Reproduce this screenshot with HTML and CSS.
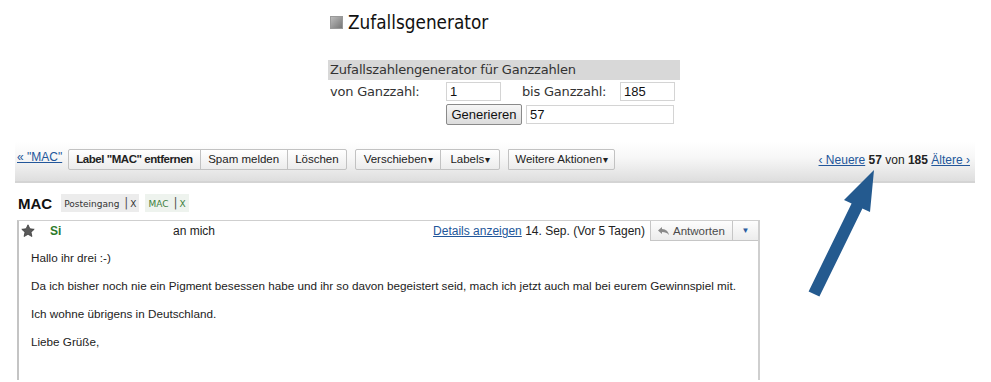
FILE: index.html
```html
<!DOCTYPE html>
<html lang="de">
<head>
<meta charset="utf-8">
<title>Zufallsgenerator</title>
<link rel="stylesheet" href="styles.css">
</head>
<body>
<div class="page">
  <section class="gen">
    <h1 class="gen-title"><span class="gen-box"></span>Zufallsgenerator</h1>
    <div class="gen-form">
      <div class="gen-head">Zufallszahlengenerator für Ganzzahlen</div>
      <div class="gen-row">
        <span class="gen-label">von Ganzzahl:</span>
        <span class="gen-input small">1</span>
        <span class="gen-label second">bis Ganzzahl:</span>
        <span class="gen-input small">185</span>
      </div>
      <div class="gen-row gen-row-btn">
        <span class="gen-btn">Generieren</span>
        <span class="gen-input wide">57</span>
      </div>
    </div>
  </section>

  <section class="mail">
    <div class="toolbar">
      <a class="back">« "MAC"</a>
      <div class="group">
        <span class="tb bold">Label "MAC" entfernen</span><span class="tb">Spam melden</span><span class="tb">Löschen</span>
      </div>
      <div class="group">
        <span class="tb">Verschieben<span class="caret">▾</span></span><span class="tb labels">Labels<span class="caret">▾</span></span>
      </div>
      <div class="group">
        <span class="tb weitere">Weitere Aktionen<span class="caret">▾</span></span>
      </div>
      <div class="nav"><a class="lnk">‹ Neuere</a> <b>57</b> von <b>185</b> <a class="lnk">Ältere ›</a></div>
    </div>

    <div class="subject">
      <span class="subj">MAC</span>
      <span class="tag">Posteingang <span class="bar">|</span>X</span>
      <span class="tag green">MAC <span class="bar">|</span>X</span>
    </div>

    <div class="msg">
      <div class="msg-head">
        <svg class="star" width="14" height="14" viewBox="0 0 14 14"><path d="M7 0.8l1.9 4 4.3.5-3.2 2.9.9 4.3L7 10.3 3.1 12.5l.9-4.3L.8 5.3l4.3-.5z" fill="#5a5a5a" stroke="#3c3c3c" stroke-width="0.8"/></svg>
        <span class="from">Si</span>
        <span class="to">an mich</span>
        <span class="meta"><a class="lnk">Details anzeigen</a> 14. Sep. (Vor 5 Tagen)</span>
        <span class="reply"><svg width="13" height="10" viewBox="0 0 13 10"><path d="M5 1L1 4.5 5 8V6c3 0 5 .7 7 3-.6-3.4-2.8-5.7-7-6z" fill="#8a8a8a"/></svg>Antworten</span><span class="drop">▼</span>
      </div>
      <div class="msg-body">
        <p>Hallo ihr drei :-)</p>
        <p>Da ich bisher noch nie ein Pigment besessen habe und ihr so davon begeistert seid, mach ich jetzt auch mal bei eurem Gewinnspiel mit.</p>
        <p>Ich wohne übrigens in Deutschland.</p>
        <p>Liebe Grüße,</p>
      </div>
    </div>
  </section>

  <svg class="arrow" width="991" height="382" viewBox="0 0 991 382">
    <polygon points="874,170 870,212 862.4,208.6 819.4,296.6 808.6,291.4 851.6,203.4 844,200" fill="#245a8f"/>
  </svg>
</div>
</body>
</html>
```

FILE: styles.css
```css
html, body {
  margin: 0;
  padding: 0;
  background: #fff;
}
.page {
  position: relative;
  width: 991px;
  height: 382px;
  overflow: hidden;
}
.gen {
  padding: 10px 0 0 328px;
  font-family: "DejaVu Sans", Verdana, sans-serif;
  color: #222;
}
.gen-title {
  margin: 0;
  height: 24px;
  display: flex;
  align-items: center;
  font-family: "DejaVu Sans Condensed", "DejaVu Sans", sans-serif;
  font-stretch: condensed;
  font-weight: normal;
  font-size: 18.8px;
  color: #111;
}
.gen-box {
  width: 11px;
  height: 11px;
  margin: 0 5px 0 2px;
  background: linear-gradient(135deg, #bbb, #777);
  border: 1px solid #999;
}
.gen-form {
  margin-top: 26px;
  width: 352px;
  font-size: 13px;
  color: #333;
}
.gen-head {
  background: #d8d8d8;
  height: 20px;
  line-height: 20px;
  padding-left: 2px;
  letter-spacing: -0.2px;
}
.gen-row {
  display: flex;
  align-items: center;
  height: 20px;
  margin-top: 1px;
}
.gen-label {
  width: 116px;
  padding-left: 2px;
  letter-spacing: -0.2px;
}
.gen-label.second {
  width: 98px;
  margin-left: 21px;
  padding-left: 0;
}
.gen-input {
  box-sizing: border-box;
  height: 19px;
  border: 1px solid #d4d4d4;
  font-family: "Liberation Sans", Arial, sans-serif;
  font-size: 13px;
  line-height: 17px;
  padding-left: 3px;
  color: #111;
}
.gen-input.small { width: 55px; }
.gen-input.wide { width: 148px; margin-left: 4px; }
.gen-row-btn {
  height: 22px;
  margin-top: 2px;
  padding-left: 118px;
}
.gen-btn {
  box-sizing: border-box;
  width: 76px;
  height: 21px;
  border: 1px solid #8a8a8a;
  border-radius: 2px;
  background: linear-gradient(#f6f6f6, #dcdcdc);
  font-family: "Liberation Sans", Arial, sans-serif;
  font-size: 13px;
  line-height: 19px;
  text-align: center;
  color: #111;
}

.mail {
  font-family: "Liberation Sans", Arial, sans-serif;
  font-size: 12px;
  color: #222;
  margin-top: 17px;
}
.toolbar {
  margin: 0 16px 0 15px;
  height: 41px;
  box-sizing: border-box;
  padding: 7px 0 0 2px;
  display: flex;
  align-items: flex-start;
  background: linear-gradient(#ffffff 0%, #f7f7f7 40%, #dedede 100%);
  border-bottom: 2px solid #d4d4d4;
}
.back {
  color: #22569a;
  text-decoration: underline;
  font-size: 12px;
  line-height: 16px;
  margin-right: 6px;
}
.group {
  display: flex;
  margin-right: 8px;
}
.tb {
  display: inline-block;
  height: 21px;
  box-sizing: border-box;
  line-height: 19px;
  padding: 0 7.5px;
  border: 1px solid #c2c2c2;
  margin-left: -1px;
  background: linear-gradient(#ffffff, #ececec);
  font-size: 11.5px;
  color: #222;
}
.group .tb:first-child { border-radius: 2px 0 0 2px; margin-left: 0; }
.group .tb:last-child { border-radius: 0 2px 2px 0; }
.tb.bold { font-weight: bold; letter-spacing: -0.45px; padding: 0 7px; }
.tb.labels { padding: 0 9px; }
.tb.weitere { padding: 0 6px; }
.caret { font-size: 10px; margin-left: 1px; }
.nav {
  margin-left: auto;
  margin-right: 5px;
  padding-top: 4px;
  font-size: 12px;
  color: #222;
}
.lnk {
  color: #22569a;
  text-decoration: underline;
}
.subject {
  display: flex;
  align-items: center;
  height: 24px;
  margin: 8px 0 0 18px;
}
.subj {
  font-weight: bold;
  font-size: 15px;
  margin-right: 9px;
  color: #111;
}
.tag {
  font-family: "DejaVu Sans", Verdana, sans-serif;
  font-size: 9px;
  background: #ececec;
  color: #333;
  padding: 2px 3px;
  margin-right: 6px;
}
.tag.green {
  background: #eef3ee;
  color: #3d7f3d;
}
.bar {
  font-size: 12px;
  margin: 0 2px 0 2px;
  color: #555;
}
.msg {
  margin: 5px 0 0 17px;
  width: 743px;
  height: 160px;
  box-sizing: border-box;
  border-top: 1px solid #cfcfcf;
  border-left: 2px solid #c4c4c4;
  border-right: 2px solid #cfcfcf;
}
.msg-head {
  display: flex;
  align-items: center;
  height: 20px;
  font-size: 12px;
}
.star { margin: 0 0 0 2px; }
.from {
  margin-left: 15px;
  width: 123px;
  font-weight: bold;
  color: #2b7a2b;
}
.meta {
  margin-left: auto;
  margin-right: 5px;
}
.reply {
  display: flex;
  align-items: center;
  gap: 3px;
  box-sizing: border-box;
  height: 20px;
  width: 83px;
  padding-left: 6px;
  border: 1px solid #c6c6c6;
  border-top: none;
  background: linear-gradient(#fdfdfd, #ececec);
  color: #4a4a4a;
  font-size: 11.5px;
  align-self: flex-start;
}
.drop {
  box-sizing: border-box;
  height: 20px;
  width: 25px;
  border-bottom: 1px solid #c6c6c6;
  background: linear-gradient(#fdfdfd, #ececec);
  color: #2a5ca0;
  font-size: 8px;
  line-height: 20px;
  text-align: center;
  align-self: flex-start;
}
.msg-body {
  padding: 10px 0 0 12px;
}
.msg-body p {
  margin: 0 0 14px;
  line-height: 14px;
  font-size: 11.7px;
  color: #222;
}
.arrow {
  position: absolute;
  left: 0;
  top: 0;
  pointer-events: none;
}
```
